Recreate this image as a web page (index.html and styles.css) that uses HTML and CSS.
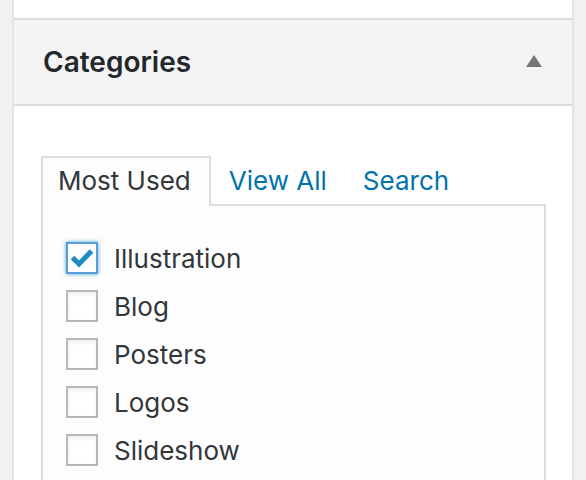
FILE: index.html
```html
<!DOCTYPE html>
<html>
<head>
<meta charset="utf-8">
<link rel="stylesheet" href="styles.css">
</head>
<body>
<div class="metabox">
  <div class="prev-box"></div>
  <div class="hndle">
    <h2 class="hndle-title">Categories</h2>
    <span class="toggle-arrow"></span>
  </div>
  <div class="inside">
    <ul class="tabs">
      <li class="tab active">Most Used</li>
      <li class="tab"><a href="#">View All</a></li>
      <li class="tab"><a href="#">Search</a></li>
    </ul>
    <div class="tabs-panel">
      <ul class="checklist">
        <li class="item"><span class="cb checked"><svg viewBox="0 0 28 28" width="28" height="28"><path d="M4.5 13.5 L11 20 L23.5 7" fill="none" stroke="#1e8cbe" stroke-width="5" stroke-linejoin="miter" stroke-linecap="butt"/></svg></span><span class="label">Illustration</span></li>
        <li class="item"><span class="cb"></span><span class="label">Blog</span></li>
        <li class="item"><span class="cb"></span><span class="label">Posters</span></li>
        <li class="item"><span class="cb"></span><span class="label">Logos</span></li>
        <li class="item"><span class="cb"></span><span class="label">Slideshow</span></li>
      </ul>
    </div>
  </div>
</div>
</body>
</html>
```

FILE: styles.css
```css
html, body {
  margin: 0;
  padding: 0;
  background: #f1f1f1;
  height: 480px;
  overflow: hidden;
}

body {
  font-family: "Inter", "Roboto", "Liberation Sans", sans-serif;
}

.metabox {
  margin-left: 12px;
  width: 558px;
  border-left: 2px solid #e4e4e4;
  border-right: 2px solid #e4e4e4;
  background: #fff;
  height: 480px;
}

.prev-box {
  height: 18px;
  background: #fff;
}

.hndle {
  height: 84px;
  border-top: 2px solid #dddddd;
  border-bottom: 2px solid #dddddd;
  background: #f4f4f4;
  display: flex;
  align-items: center;
  justify-content: space-between;
  padding: 0 30px 0 29px;
}

.hndle-title {
  margin: 0;
  font-size: 28px;
  font-weight: 600;
  color: #23282d;
}

.toggle-arrow {
  width: 0;
  height: 0;
  border-left: 8px solid transparent;
  border-right: 8px solid transparent;
  border-bottom: 12px solid #72777c;
  margin-top: -2px;
}

.inside {
  padding: 50px 26px 0 27px;
}

.tabs {
  list-style: none;
  margin: 0;
  padding: 0;
  display: flex;
  align-items: stretch;
}

.tab {
  box-sizing: border-box;
  height: 48px;
  display: flex;
  align-items: center;
  padding: 0 16px 2px;
  font-size: 26px;
  color: #32373c;
  border: 2px solid transparent;
  border-bottom: none;
}

.tab a {
  color: #0073aa;
  text-decoration: none;
}

.tab.active {
  height: 50px;
  padding: 0 18px 4px 15px;
  background: #fdfdfd;
  border-color: #dddddd;
  margin-bottom: -2px;
  position: relative;
  z-index: 1;
}

.tabs-panel {
  border: 2px solid #dddddd;
  background: #fdfdfd;
  padding: 28px 23px 0 23px;
  height: 300px;
}

.checklist {
  list-style: none;
  margin: 0;
  padding: 0;
}

.item {
  height: 48px;
  display: flex;
  align-items: center;
  font-size: 26px;
  color: #32373c;
}

.cb {
  box-sizing: border-box;
  width: 32px;
  height: 32px;
  border: 2px solid #b4b9be;
  background: #fff;
  box-shadow: inset 0 2px 4px rgba(0, 0, 0, 0.08);
  margin-right: 16px;
  display: flex;
  align-items: center;
  justify-content: center;
  flex: none;
}

.cb.checked {
  border-color: #5b9dd9;
  box-shadow: 0 0 4px rgba(30, 140, 190, 0.8);
}
```
